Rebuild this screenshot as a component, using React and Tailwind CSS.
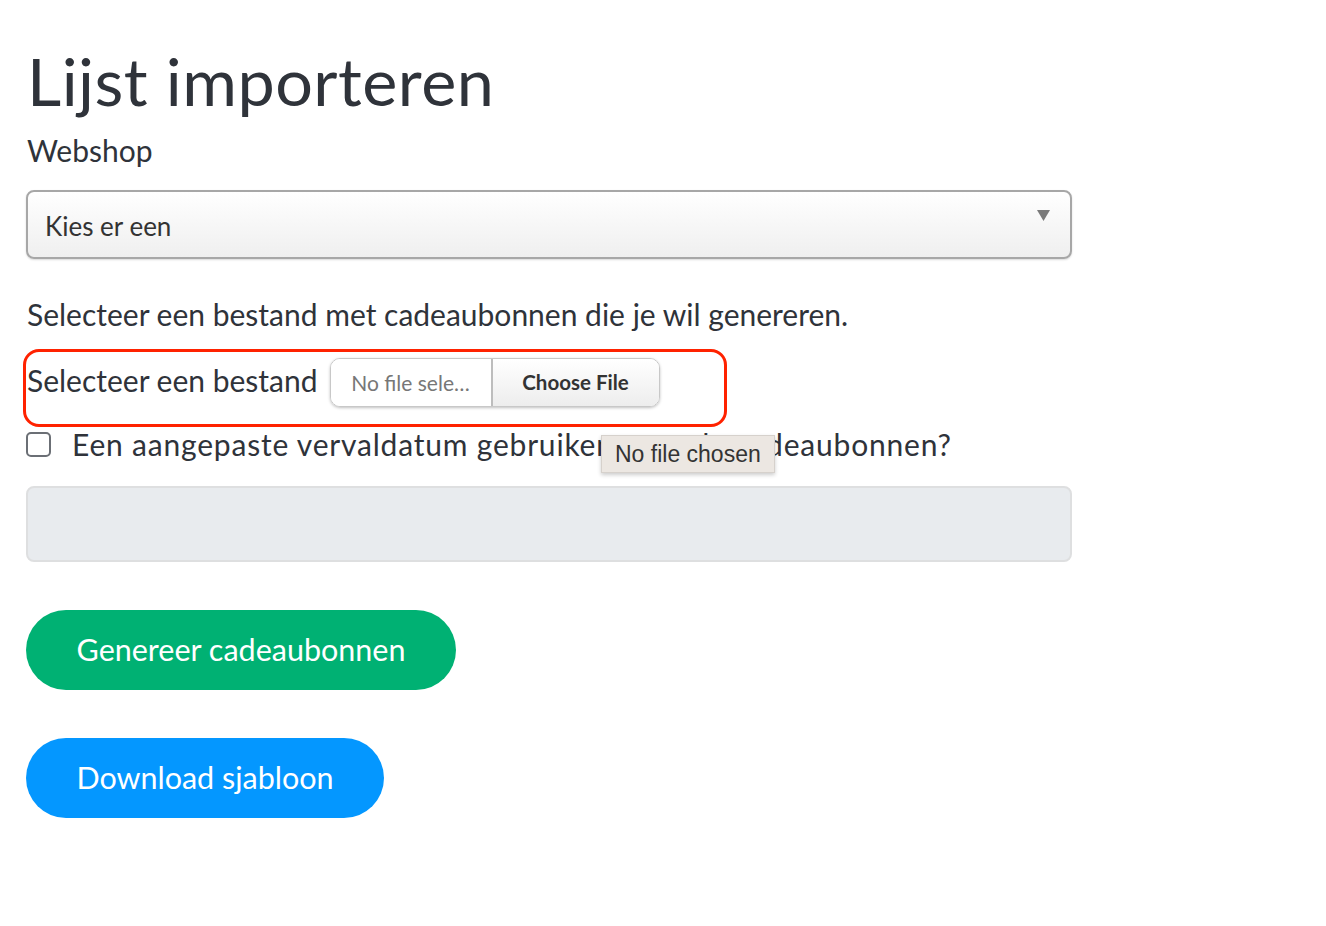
import { useState } from "react";

const App = () => {
  const [customDate, setCustomDate] = useState(false);

  return (
    <div className="min-h-[926px] w-full bg-white text-[#2f333a] font-['Lato','Noto_Sans',sans-serif]">
      <div className="w-[1046px] ml-[26px] pt-[40px]">
        <h1 className="text-[66.5px] leading-[80px] tracking-[0.5px] ml-[1px]">Lijst importeren</h1>

        <label className="block mt-[10px] text-[30px] leading-[40px] ml-[1px]">Webshop</label>

        <div className="relative mt-[20px] h-[69px] rounded-[8px] border-2 border-[#a7a7a7] bg-gradient-to-b from-white via-[#f7f7f7] to-[#efefef] shadow-[0_1px_2px_rgba(0,0,0,0.15)] flex items-center">
          <span className="ml-[17px] mt-[4px] text-[26px] text-[#333]">Kies er een</span>
          <svg className="absolute right-[20px] top-[18px]" width="13" height="11" viewBox="0 0 13 11">
            <polygon points="0,0 13,0 6.5,11" fill="#7a7a7a" />
          </svg>
        </div>

        <p className="mt-[35px] text-[30px] leading-[40px] ml-[1px]">
          Selecteer een bestand met cadeaubonnen die je wil genereren.
        </p>

        <div className="relative mt-[15px] -ml-[3px] w-[704px] h-[78px] rounded-[16px] border-[3px] border-[#ff2200] flex items-start">
          <span className="ml-[1px] mt-[8px] text-[30px] leading-[40px]">Selecteer een bestand</span>
          <div className="ml-[12px] mt-[6px] flex h-[49px] rounded-[10px] border border-[#c8c8c8] shadow-[0_1px_3px_rgba(0,0,0,0.25)] overflow-hidden">
            <div className="w-[162px] flex items-center justify-center bg-white text-[21px] text-[#777] border-r-2 border-[#bdbdbd]">
              No file sele…
            </div>
            <div className="w-[166px] flex items-center justify-center bg-gradient-to-b from-white to-[#ededed] text-[20.5px] font-bold text-[#333]">
              Choose File
            </div>
          </div>
        </div>

        <div className="relative -mt-[3px] flex items-center h-[40px]">
          <input
            type="checkbox"
            checked={customDate}
            onChange={() => setCustomDate(!customDate)}
            className="appearance-none w-[25px] h-[25px] rounded-[5px] border-2 border-[#6b6f75] bg-white"
          />
          <span className="ml-[21px] text-[30px] leading-[40px] tracking-[0.8px]">
            Een aangepaste vervaldatum gebruiken voor de cadeaubonnen?
          </span>
          <div className="absolute left-[575px] top-[11px] h-[38px] px-[13px] flex items-center bg-[#ece7e2] border border-[#d6d1cc] shadow-[0_2px_4px_rgba(0,0,0,0.2)] text-[23px] text-[#333] font-['Liberation_Sans',sans-serif]">
            No file chosen
          </div>
        </div>

        <div className="mt-[22px] h-[76px] rounded-[8px] border-2 border-[#dedfe0] bg-[#e8ebee]"></div>

        <button className="mt-[48px] block h-[80px] w-[430px] rounded-full bg-[#00b173] text-white text-[30.5px]">
          Genereer cadeaubonnen
        </button>

        <button className="mt-[48px] block h-[80px] w-[358px] rounded-full bg-[#0497ff] text-white text-[30.5px]">
          Download sjabloon
        </button>
      </div>
    </div>
  );
};

export default App;
